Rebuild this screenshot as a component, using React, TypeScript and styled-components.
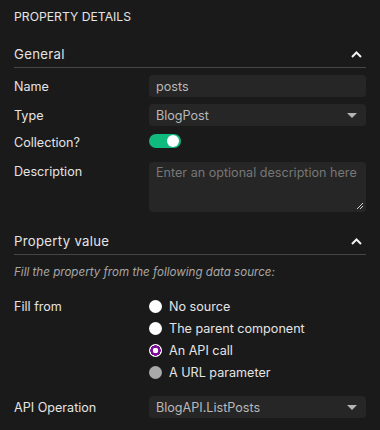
import React from "react";
import styled, { createGlobalStyle } from "styled-components";

const GlobalStyle = createGlobalStyle`
  body {
    margin: 0;
    background: #1a1a1a;
    font-family: Inter, "Noto Sans", "Liberation Sans", sans-serif;
    color: #e4e4e4;
  }
`;

const Panel = styled.div`
  padding: 8px 14px 0 14px;
  width: 352px;
  height: 430px;
  box-sizing: content-box;
`;

const Title = styled.div`
  font-size: 12.2px;
  line-height: 17px;
`;

const SectionHeader = styled.div<{ $mt: number }>`
  margin-top: ${(p) => p.$mt}px;
  height: 28px;
  display: flex;
  align-items: center;
  justify-content: space-between;
  border-bottom: 1px solid #464646;
  font-size: 13.2px;
  letter-spacing: 0.3px;
  box-sizing: border-box;
`;

const Chevron = styled.svg`
  margin-right: 4px;
  margin-top: 1px;
`;

const Row = styled.div<{ $mt: number; $h: number; $top?: boolean }>`
  margin-top: ${(p) => p.$mt}px;
  min-height: ${(p) => p.$h}px;
  display: grid;
  grid-template-columns: 135px 1fr;
  align-items: ${(p) => (p.$top ? "start" : "center")};
`;

const Label = styled.div<{ $pt?: number }>`
  font-size: 12.6px;
  padding-top: ${(p) => p.$pt ?? 0}px;
`;

const Field = styled.div`
  height: 22px;
  background: #262626;
  border-radius: 4px;
  display: flex;
  align-items: center;
  justify-content: space-between;
  padding: 0 9px 0 7px;
  font-size: 12.6px;
  color: #b9b9b9;
`;

const Caret = styled.span`
  width: 0;
  height: 0;
  border-left: 5px solid transparent;
  border-right: 5px solid transparent;
  border-top: 5px solid #b5b5b5;
  margin-top: 1px;
`;

const TextArea = styled.div`
  position: relative;
  height: 50px;
  background: #262626;
  border-radius: 4px;
  padding: 3px 7px;
  box-sizing: border-box;
  font-size: 12.6px;
  line-height: 16px;
  color: #777;
  white-space: nowrap;
`;

const Grip = styled.svg`
  position: absolute;
  right: 2px;
  bottom: 2px;
`;

const Toggle = styled.div<{ $on: boolean }>`
  width: 32px;
  height: 14px;
  border-radius: 7px;
  background: ${(p) => (p.$on ? "#10b97e" : "#555")};
  position: relative;
  margin-top: -3px;
  &::after {
    content: "";
    position: absolute;
    top: 1px;
    ${(p) => (p.$on ? "right: 2px;" : "left: 2px;")}
    width: 12px;
    height: 12px;
    border-radius: 50%;
    background: #fff;
  }
`;

const Hint = styled.div`
  margin-top: 9px;
  font-size: 11.6px;
  font-style: italic;
  color: #a8a8a8;
  line-height: 16px;
`;

const RadioList = styled.div`
  display: flex;
  flex-direction: column;
`;

const RadioItem = styled.label`
  height: 22px;
  display: flex;
  align-items: center;
  gap: 7px;
  font-size: 12.6px;
`;

const RadioDot = styled.span<{ $state: "off" | "on" | "disabled" }>`
  width: 13px;
  height: 13px;
  border-radius: 50%;
  box-sizing: border-box;
  flex-shrink: 0;
  background: ${(p) =>
    p.$state === "disabled"
      ? "#a9a9a9"
      : p.$state === "on"
      ? "radial-gradient(circle, #ffffff 0 2.6px, #7a0f96 3px 5px, #ffffff 5.4px)"
      : "#ffffff"};
`;

const radios: { label: string; state: "off" | "on" | "disabled" }[] = [
  { label: "No source", state: "off" },
  { label: "The parent component", state: "off" },
  { label: "An API call", state: "on" },
  { label: "A URL parameter", state: "disabled" },
];

const Up = () => (
  <Chevron width="11" height="7" viewBox="0 0 11 7">
    <path d="M1 6 L5.5 1.5 L10 6" stroke="#f2f2f2" strokeWidth="2" fill="none" />
  </Chevron>
);

export default function App() {
  return (
    <Panel>
      <GlobalStyle />
      <Title>PROPERTY DETAILS</Title>

      <SectionHeader $mt={15}>
        <span>General</span>
        <Up />
      </SectionHeader>

      <Row $mt={7} $h={22}>
        <Label>Name</Label>
        <Field>posts</Field>
      </Row>
      <Row $mt={7} $h={22}>
        <Label>Type</Label>
        <Field>
          BlogPost
          <Caret />
        </Field>
      </Row>
      <Row $mt={7} $h={18}>
        <Label>Collection?</Label>
        <Toggle $on />
      </Row>
      <Row $mt={11} $h={50} $top>
        <Label $pt={2}>Description</Label>
        <TextArea>
          Enter an optional description here
          <Grip width="8" height="8" viewBox="0 0 8 8">
            <path d="M7 1 L1 7 M7 4 L4 7" stroke="#cfcfcf" strokeWidth="1" />
          </Grip>
        </TextArea>
      </Row>

      <SectionHeader $mt={15}>
        <span>Property value</span>
        <Up />
      </SectionHeader>
      <Hint>Fill the property from the following data source:</Hint>

      <Row $mt={15} $h={88} $top>
        <Label $pt={4}>Fill from</Label>
        <RadioList>
          {radios.map((r) => (
            <RadioItem key={r.label}>
              <RadioDot $state={r.state} />
              {r.label}
            </RadioItem>
          ))}
        </RadioList>
      </Row>

      <Row $mt={13} $h={22}>
        <Label>API Operation</Label>
        <Field>
          BlogAPI.ListPosts
          <Caret />
        </Field>
      </Row>
    </Panel>
  );
}
